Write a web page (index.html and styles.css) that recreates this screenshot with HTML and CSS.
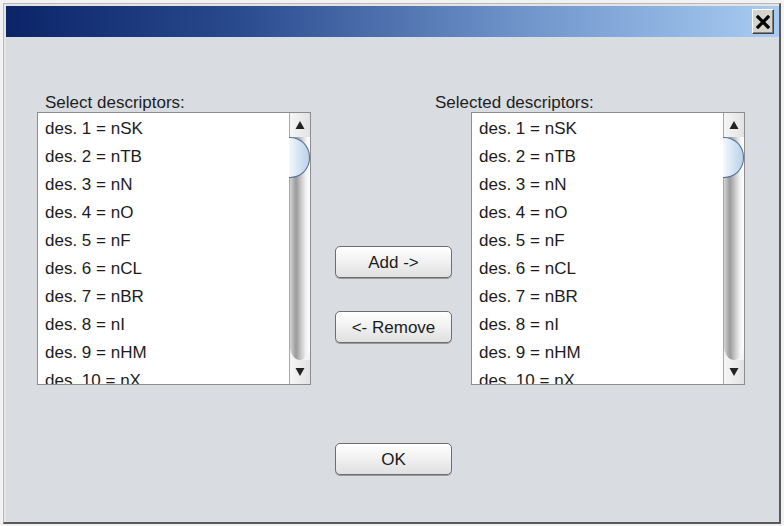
FILE: index.html
```html
<!DOCTYPE html>
<html>
<head>
<meta charset="utf-8">
<link rel="stylesheet" href="styles.css">
</head>
<body>
<div class="frame">
  <div class="titlebar">
    <div class="close" title="Close">
      <svg width="14" height="14" viewBox="0 0 14 14"><path d="M2 2 L12 12 M12 2 L2 12" stroke="#000" stroke-width="3.2" stroke-linecap="square"/></svg>
    </div>
  </div>
  <div class="content">
    <div class="grid">
      <div class="label label-left">Select descriptors:</div>
      <div></div>
      <div class="label label-right">Selected descriptors:</div>

      <div class="listbox">
        <ul class="items">
          <li>des. 1 = nSK</li>
          <li>des. 2 = nTB</li>
          <li>des. 3 = nN</li>
          <li>des. 4 = nO</li>
          <li>des. 5 = nF</li>
          <li>des. 6 = nCL</li>
          <li>des. 7 = nBR</li>
          <li>des. 8 = nI</li>
          <li>des. 9 = nHM</li>
          <li>des. 10 = nX</li>
        </ul>
        <div class="scrollbar">
          <div class="arrow up"><svg width="10" height="10" viewBox="0 0 10 10"><path d="M5 1 L9.5 9 L0.5 9 Z" fill="#222"/></svg></div>
          <div class="track"><div class="thumb"></div></div>
          <div class="arrow down"><svg width="10" height="10" viewBox="0 0 10 10"><path d="M0.5 1 L9.5 1 L5 9 Z" fill="#222"/></svg></div>
        </div>
      </div>

      <div class="middle">
        <button class="btn">Add -&gt;</button>
        <button class="btn">&lt;- Remove</button>
      </div>

      <div class="listbox">
        <ul class="items">
          <li>des. 1 = nSK</li>
          <li>des. 2 = nTB</li>
          <li>des. 3 = nN</li>
          <li>des. 4 = nO</li>
          <li>des. 5 = nF</li>
          <li>des. 6 = nCL</li>
          <li>des. 7 = nBR</li>
          <li>des. 8 = nI</li>
          <li>des. 9 = nHM</li>
          <li>des. 10 = nX</li>
        </ul>
        <div class="scrollbar">
          <div class="arrow up"><svg width="10" height="10" viewBox="0 0 10 10"><path d="M5 1 L9.5 9 L0.5 9 Z" fill="#222"/></svg></div>
          <div class="track"><div class="thumb"></div></div>
          <div class="arrow down"><svg width="10" height="10" viewBox="0 0 10 10"><path d="M0.5 1 L9.5 1 L5 9 Z" fill="#222"/></svg></div>
        </div>
      </div>

      <div></div>
      <div class="okcell"><button class="btn">OK</button></div>
      <div></div>
    </div>
  </div>
</div>
</body>
</html>
```

FILE: styles.css
```css
* { box-sizing: border-box; }
html, body { margin: 0; padding: 0; }
body {
  width: 784px;
  height: 526px;
  background: #f2f2f2;
  padding: 3px;
  font-family: "Liberation Sans", Arial, sans-serif;
  overflow: hidden;
}
.frame {
  width: 778px;
  height: 521px;
  border-left: 1px solid #b8b8b8;
  border-top: 1px solid #b8b8b8;
  border-right: 2px solid #5a5a5a;
  border-bottom: 2px solid #5a5a5a;
  padding: 2px 0 0 2px;
  background: #e4e4e4;
  display: flex;
  flex-direction: column;
}
.titlebar {
  height: 31px;
  flex: none;
  background: linear-gradient(to right, #0b2468 0%, #2a4a8e 30%, #6c91c8 65%, #a8ccf2 100%);
  display: flex;
  justify-content: flex-end;
  align-items: center;
  padding-right: 5px;
}
.close {
  width: 22px;
  height: 25px;
  background: #d6d3cc;
  border-top: 1px solid #ffffff;
  border-left: 1px solid #ffffff;
  border-right: 1px solid #404040;
  border-bottom: 1px solid #404040;
  box-shadow: inset -1px -1px 0 #808080;
  display: flex;
  align-items: center;
  justify-content: center;
}
.content {
  flex: 1;
  background: #d9dde1;
  padding: 56px 0 0 31px;
}
.grid {
  display: grid;
  grid-template-columns: 274px 160px 274px;
  grid-template-rows: 19px 273px auto;
}
.label {
  font-size: 17px;
  line-height: 19px;
  color: #1e1e1e;
  white-space: nowrap;
}
.label-left { padding-left: 8px; }
.label-right { margin-left: -36px; }
.listbox {
  border: 1px solid #8c8c8c;
  background: #ffffff;
  display: flex;
  overflow: hidden;
}
.items {
  list-style: none;
  margin: 0;
  padding: 2px 0 0 7px;
  flex: 1;
  overflow: hidden;
}
.items li {
  height: 28px;
  line-height: 28px;
  font-size: 17px;
  color: #1c1c1c;
  white-space: nowrap;
}
.scrollbar {
  width: 21px;
  flex: none;
  border-left: 1px solid #a8a8a8;
  background: #f4f4f4;
  display: flex;
  flex-direction: column;
}
.arrow {
  height: 24px;
  flex: none;
  display: flex;
  align-items: center;
  justify-content: center;
  background: linear-gradient(to right, #f6f6f6, #e2e2e2);
}
.track {
  flex: 1;
  background: linear-gradient(to right, #d4d4d4 0%, #9a9a9a 30%, #c8c8c8 55%, #f2f2f2 80%, #ffffff 100%);
  border-radius: 0 0 10px 10px / 0 0 14px 14px;
  position: relative;
}
.thumb {
  position: absolute;
  left: -1px;
  top: 0;
  width: 21px;
  height: 41px;
  border: 1.5px solid #4d6e9e;
  border-left: none;
  border-radius: 0 20px 20px 0 / 0 20px 20px 0;
  background: linear-gradient(to right, #f4f8fc 0%, #d6e4f2 50%, #bcd2e8 100%);
}
.middle {
  display: flex;
  flex-direction: column;
  padding: 134px 0 0 24px;
  gap: 33px;
}
.btn {
  width: 117px;
  height: 32px;
  border: 1px solid #6e6e6e;
  border-radius: 5px;
  background: linear-gradient(to bottom, #ffffff 0%, #f2f2f2 45%, #e0e0e0 100%);
  box-shadow: 0 1px 0 #9a9a9a;
  font-family: "Liberation Sans", Arial, sans-serif;
  font-size: 17px;
  color: #1c1c1c;
  padding: 2px 0 0 0;
  margin: 0;
}
.okcell {
  padding: 58px 0 0 24px;
}
```
